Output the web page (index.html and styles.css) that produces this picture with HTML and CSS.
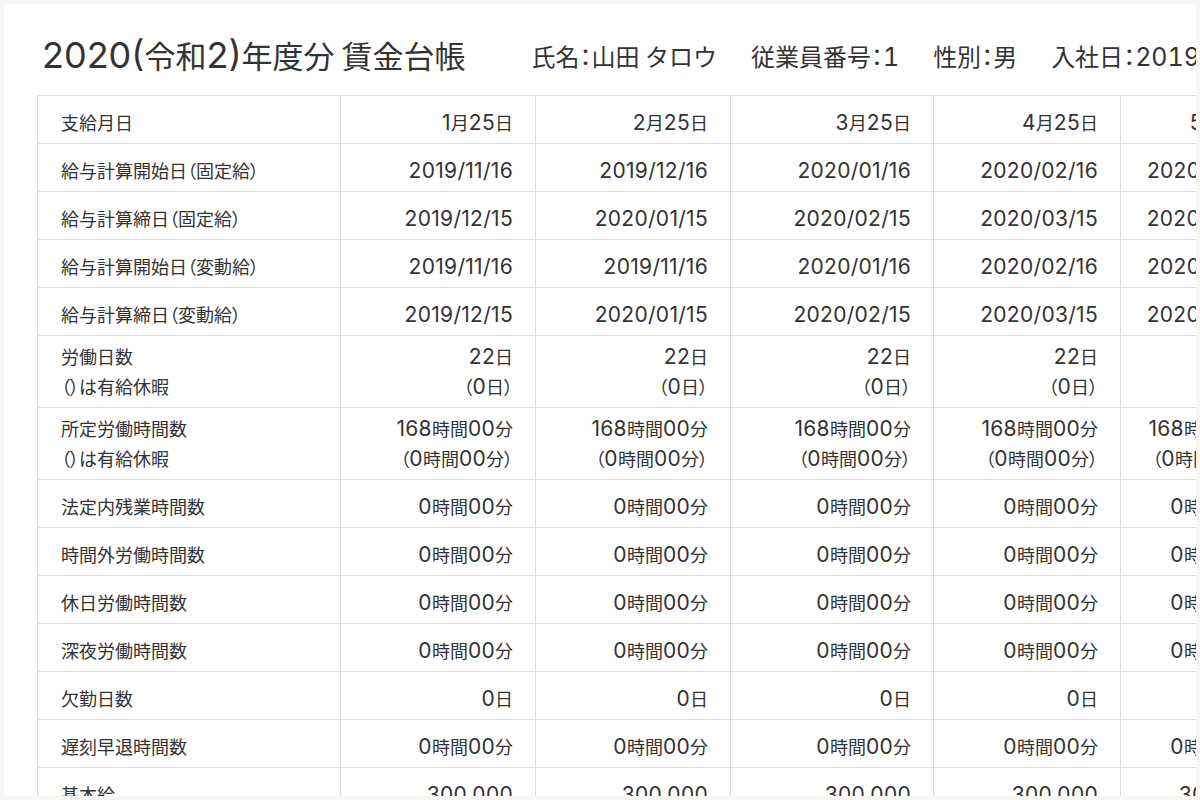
FILE: index.html
```html
<!DOCTYPE html>
<html lang="ja">
<head>
<meta charset="utf-8">
<title>賃金台帳</title>
<link rel="stylesheet" href="styles.css">
</head>
<body>
<div class="sheet">
  <header class="sheet-header">
    <h1 class="title"><span class="n">2020(</span>令和<span class="n">2)</span>年度分 賃金台帳</h1>
    <ul class="info">
      <li>氏名<span class="colon">：</span>山田 タロウ</li>
      <li>従業員番号<span class="colon">：</span><span class="n">1</span></li>
      <li>性別<span class="colon">：</span>男</li>
      <li>入社日<span class="colon">：</span><span class="n">2019/04/01</span></li>
    </ul>
  </header>
  <table class="ledger">
    <colgroup>
      <col class="c-label">
      <col class="c1">
      <col class="c2">
      <col class="c3">
      <col class="c4">
      <col class="c5">
    </colgroup>
    <tbody>
      <tr><th>支給月日</th><td><span class="n">1</span>月<span class="n">25</span>日</td><td><span class="n">2</span>月<span class="n">25</span>日</td><td><span class="n">3</span>月<span class="n">25</span>日</td><td><span class="n">4</span>月<span class="n">25</span>日</td><td><span class="n">5</span>月<span class="n">25</span>日</td></tr>
      <tr><th>給与計算開始日（固定給）</th><td><span class="n">2019/11/16</span></td><td><span class="n">2019/12/16</span></td><td><span class="n">2020/01/16</span></td><td><span class="n">2020/02/16</span></td><td><span class="n">2020/03/16</span></td></tr>
      <tr><th>給与計算締日（固定給）</th><td><span class="n">2019/12/15</span></td><td><span class="n">2020/01/15</span></td><td><span class="n">2020/02/15</span></td><td><span class="n">2020/03/15</span></td><td><span class="n">2020/04/15</span></td></tr>
      <tr><th>給与計算開始日（変動給）</th><td><span class="n">2019/11/16</span></td><td><span class="n">2019/11/16</span></td><td><span class="n">2020/01/16</span></td><td><span class="n">2020/02/16</span></td><td><span class="n">2020/03/16</span></td></tr>
      <tr><th>給与計算締日（変動給）</th><td><span class="n">2019/12/15</span></td><td><span class="n">2020/01/15</span></td><td><span class="n">2020/02/15</span></td><td><span class="n">2020/03/15</span></td><td><span class="n">2020/04/15</span></td></tr>
      <tr class="double"><th>労働日数<br>（）は有給休暇</th><td><span class="n">22</span>日<br>（<span class="n">0</span>日）</td><td><span class="n">22</span>日<br>（<span class="n">0</span>日）</td><td><span class="n">22</span>日<br>（<span class="n">0</span>日）</td><td><span class="n">22</span>日<br>（<span class="n">0</span>日）</td><td><span class="n">22</span>日<br>（<span class="n">0</span>日）</td></tr>
      <tr class="double"><th>所定労働時間数<br>（）は有給休暇</th><td><span class="n">168</span>時間<span class="n">00</span>分<br>（<span class="n">0</span>時間<span class="n">00</span>分）</td><td><span class="n">168</span>時間<span class="n">00</span>分<br>（<span class="n">0</span>時間<span class="n">00</span>分）</td><td><span class="n">168</span>時間<span class="n">00</span>分<br>（<span class="n">0</span>時間<span class="n">00</span>分）</td><td><span class="n">168</span>時間<span class="n">00</span>分<br>（<span class="n">0</span>時間<span class="n">00</span>分）</td><td><span class="n">168</span>時間<span class="n">00</span>分<br>（<span class="n">0</span>時間<span class="n">00</span>分）</td></tr>
      <tr><th>法定内残業時間数</th><td><span class="n">0</span>時間<span class="n">00</span>分</td><td><span class="n">0</span>時間<span class="n">00</span>分</td><td><span class="n">0</span>時間<span class="n">00</span>分</td><td><span class="n">0</span>時間<span class="n">00</span>分</td><td><span class="n">0</span>時間<span class="n">00</span>分</td></tr>
      <tr><th>時間外労働時間数</th><td><span class="n">0</span>時間<span class="n">00</span>分</td><td><span class="n">0</span>時間<span class="n">00</span>分</td><td><span class="n">0</span>時間<span class="n">00</span>分</td><td><span class="n">0</span>時間<span class="n">00</span>分</td><td><span class="n">0</span>時間<span class="n">00</span>分</td></tr>
      <tr><th>休日労働時間数</th><td><span class="n">0</span>時間<span class="n">00</span>分</td><td><span class="n">0</span>時間<span class="n">00</span>分</td><td><span class="n">0</span>時間<span class="n">00</span>分</td><td><span class="n">0</span>時間<span class="n">00</span>分</td><td><span class="n">0</span>時間<span class="n">00</span>分</td></tr>
      <tr><th>深夜労働時間数</th><td><span class="n">0</span>時間<span class="n">00</span>分</td><td><span class="n">0</span>時間<span class="n">00</span>分</td><td><span class="n">0</span>時間<span class="n">00</span>分</td><td><span class="n">0</span>時間<span class="n">00</span>分</td><td><span class="n">0</span>時間<span class="n">00</span>分</td></tr>
      <tr><th>欠勤日数</th><td><span class="n">0</span>日</td><td><span class="n">0</span>日</td><td><span class="n">0</span>日</td><td><span class="n">0</span>日</td><td><span class="n">0</span>日</td></tr>
      <tr><th>遅刻早退時間数</th><td><span class="n">0</span>時間<span class="n">00</span>分</td><td><span class="n">0</span>時間<span class="n">00</span>分</td><td><span class="n">0</span>時間<span class="n">00</span>分</td><td><span class="n">0</span>時間<span class="n">00</span>分</td><td><span class="n">0</span>時間<span class="n">00</span>分</td></tr>
      <tr><th>基本給</th><td><span class="n">300,000</span></td><td><span class="n">300,000</span></td><td><span class="n">300,000</span></td><td><span class="n">300,000</span></td><td><span class="n">300,000</span></td></tr>
    </tbody>
  </table>
</div>
</body>
</html>
```

FILE: styles.css
```css
* { box-sizing: border-box; }
html, body { margin: 0; padding: 0; }
body {
  background: #f7f6f2;
  font-family: "Noto Sans CJK JP", "Noto Sans", sans-serif;
  color: #333333;
}
.n {
  font-family: "Inter", "Noto Sans CJK JP", sans-serif;
  line-height: 1;
}
.colon { font-feature-settings: "palt"; }
.sheet {
  margin: 4px;
  height: 792px;
  background: #ffffff;
  overflow: hidden;
}
.sheet-header {
  display: flex;
  align-items: baseline;
  white-space: nowrap;
  padding: 29px 0 0 38px;
  height: 91px;
}
.title {
  margin: 0;
  font-size: 31px;
  font-weight: 400;
  line-height: 44px;
  color: #333333;
}
.title .n { font-size: 36px; }
.info {
  display: flex;
  gap: 34px;
  margin: 0 0 0 66px;
  padding: 0;
  list-style: none;
  font-size: 24px;
  line-height: 44px;
  position: relative;
  top: -2px;
}
.info .n { font-size: 25px; font-variant-numeric: tabular-nums; }
.ledger {
  margin-left: 33px;
  border-collapse: collapse;
  table-layout: fixed;
  width: 1250px;
  font-size: 18px;
  font-feature-settings: "palt";
}
.ledger .n {
  font-size: 21px;
  letter-spacing: 0.3px;
  font-feature-settings: normal;
}
.c-label { width: 303px; }
.c1 { width: 195px; }
.c2 { width: 195px; }
.c3 { width: 203px; }
.c4 { width: 187px; }
.c5 { width: 167px; }
.ledger th, .ledger td {
  border: 1px solid #e2ded5;
  height: 48px;
  padding: 11px 22px 6px 23px;
  line-height: 30px;
  font-weight: 400;
  white-space: nowrap;
  vertical-align: middle;
}
.ledger .double th, .ledger .double td {
  padding-top: 5px;
  padding-bottom: 6px;
}
.ledger th { text-align: left; }
.ledger td { text-align: right; }
```
